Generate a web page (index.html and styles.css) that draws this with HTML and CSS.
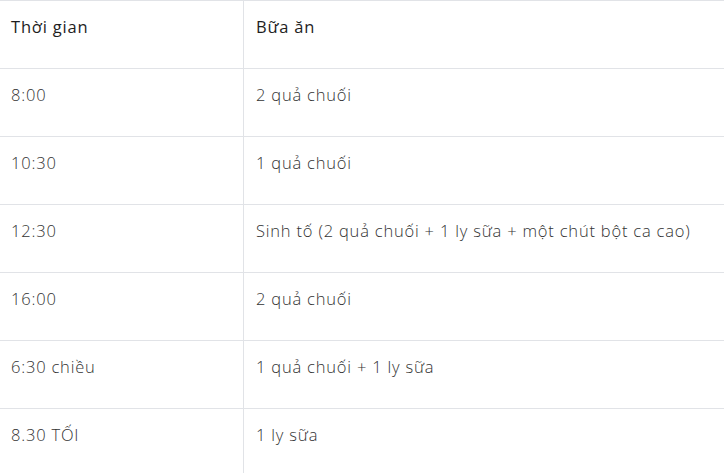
FILE: index.html
```html
<!DOCTYPE html>
<html lang="vi">
<head>
<meta charset="utf-8">
<link rel="stylesheet" href="styles.css">
</head>
<body>
<table class="meal-table">
  <tr class="head"><td class="c1">Thời gian</td><td class="c2">Bữa ăn</td></tr>
  <tr><td class="c1">8:00</td><td class="c2">2 quả chuối</td></tr>
  <tr><td class="c1">10:30</td><td class="c2">1 quả chuối</td></tr>
  <tr><td class="c1">12:30</td><td class="c2">Sinh tố (2 quả chuối + 1 ly sữa + một chút bột ca cao)</td></tr>
  <tr><td class="c1">16:00</td><td class="c2">2 quả chuối</td></tr>
  <tr><td class="c1">6:30 chiều</td><td class="c2">1 quả chuối + 1 ly sữa</td></tr>
  <tr><td class="c1">8.30 TỐI</td><td class="c2">1 ly sữa</td></tr>
</table>
</body>
</html>
```

FILE: styles.css
```css
html, body {
  margin: 0;
  padding: 0;
  background: #ffffff;
}
.meal-table {
  border-collapse: collapse;
  width: 100%;
  font-family: "Open Sans", "Noto Sans", sans-serif;
  font-weight: 300;
  font-size: 16.5px;
  letter-spacing: 0.8px;
  color: #333333;
}
.meal-table td {
  border-top: 1px solid #e1e3e7;
  padding: 13px 11px 28px 11px;
  line-height: 26px;
  vertical-align: top;
  text-align: left;
  white-space: nowrap;
}
.meal-table td.c1 {
  width: 221px;
}
.meal-table td.c2 {
  border-left: 1px solid #e1e3e7;
  padding-left: 12px;
}
.meal-table tr.head td {
  font-weight: 500;
  color: #1e1e1e;
}
```
